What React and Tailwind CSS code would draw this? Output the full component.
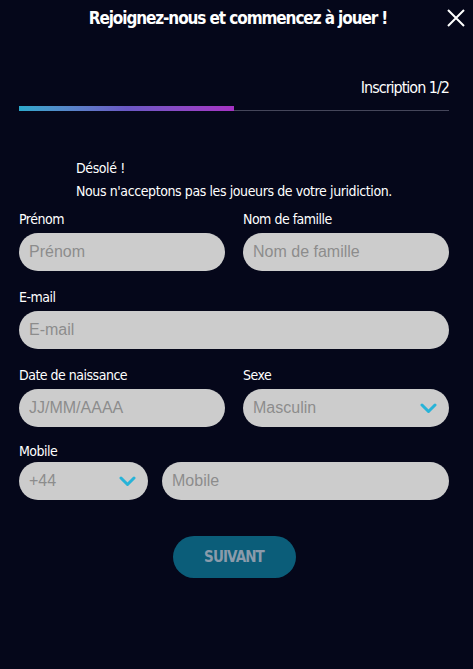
import { useState } from 'react'

const font = { fontFamily: '"DejaVu Sans Condensed", "Liberation Sans Narrow", "Roboto", sans-serif' }
const arial = { fontFamily: '"Liberation Sans", Arial, sans-serif' }

function Chevron() {
  return (
    <svg width="17" height="11" viewBox="0 0 17 11" className="shrink-0">
      <path d="M2 2 L8.5 8.5 L15 2" fill="none" stroke="#27b3d8" strokeWidth="3" strokeLinecap="round" strokeLinejoin="round" />
    </svg>
  )
}

function Label({ children, className = 'h-[22px]' }) {
  return (
    <label className={'text-[14px] leading-[17px] text-white tracking-[-0.5px] ' + className} style={font}>
      {children}
    </label>
  )
}

function Field({ label, placeholder, className = '' }) {
  return (
    <div className={'flex flex-col ' + className}>
      <Label>{label}</Label>
      <input
        placeholder={placeholder}
        className="h-[38px] w-full rounded-full bg-[#cccccc] px-[10px] text-[16px] text-[#555] placeholder:text-[#8c8c8c] outline-none"
        style={arial}
      />
    </div>
  )
}

function Select({ value, className = '' }) {
  return (
    <div
      className={'h-[38px] rounded-full bg-[#cccccc] pl-[10px] pr-[12px] flex items-center justify-between text-[16px] text-[#8c8c8c] ' + className}
      style={arial}
    >
      <span>{value}</span>
      <Chevron />
    </div>
  )
}

export default function App() {
  const [sent] = useState(false)

  return (
    <div className="w-[473px] h-[669px] bg-[#05071a] text-white relative overflow-hidden">
      <div className="h-[37px] flex items-center justify-center pl-[3px]">
        <h1 className="text-[17px] font-bold tracking-[-1.1px]" style={font}>Rejoignez-nous et commencez à jouer !</h1>
      </div>
      <button className="absolute right-[7px] top-[8px] w-[20px] h-[20px]">
        <svg width="20" height="20" viewBox="0 0 20 20">
          <path d="M2 2 L18 18 M18 2 L2 18" stroke="#fff" strokeWidth="2" />
        </svg>
      </button>

      <div className="px-[19px] pr-[24px]">
        <div className="flex justify-end mt-[41px] text-[16px] leading-[20px] tracking-[-1px]" style={font}>Inscription 1/2</div>
        <div className="mt-[8px] relative h-[5px]">
          <div className="absolute left-0 right-0 bottom-0 h-px bg-[#45465a]" />
          <div className="absolute left-0 top-0 h-[5px] w-[215px] bg-gradient-to-r from-[#2aa9cc] via-[#6a58c4] to-[#a632c4]" />
        </div>

        <div className="mt-[46px] pl-[57px] text-[14px] leading-[23px] tracking-[-0.4px]" style={font}>
          <p>Désolé !</p>
          <p>Nous n'acceptons pas les joueurs de votre juridiction.</p>
        </div>

        <div className="mt-[8px] grid grid-cols-2 gap-x-[18px]">
          <Field label="Prénom" placeholder="Prénom" />
          <Field label="Nom de famille" placeholder="Nom de famille" />
        </div>

        <Field label="E-mail" placeholder="E-mail" className="mt-[18px]" />

        <div className="mt-[18px] grid grid-cols-2 gap-x-[18px]">
          <Field label="Date de naissance" placeholder="JJ/MM/AAAA" />
          <div className="flex flex-col">
            <Label>Sexe</Label>
            <Select value="Masculin" />
          </div>
        </div>

        <div className="mt-[16px] flex flex-col">
          <Label className="h-[19px]">Mobile</Label>
          <div className="flex gap-[14px]">
            <Select value="+44" className="w-[129px] shrink-0" />
            <input
              placeholder="Mobile"
              className="h-[38px] flex-1 min-w-0 rounded-full bg-[#cccccc] px-[10px] text-[16px] placeholder:text-[#8c8c8c] outline-none"
              style={arial}
            />
          </div>
        </div>

        <div className="mt-[36px] flex justify-center">
          <button
            disabled={!sent}
            className="h-[42px] w-[123px] rounded-full bg-[#0b5d79] text-[#8a9bab] text-[15px] font-bold tracking-[-0.9px]"
            style={font}
          >
            SUIVANT
          </button>
        </div>
      </div>
    </div>
  )
}
